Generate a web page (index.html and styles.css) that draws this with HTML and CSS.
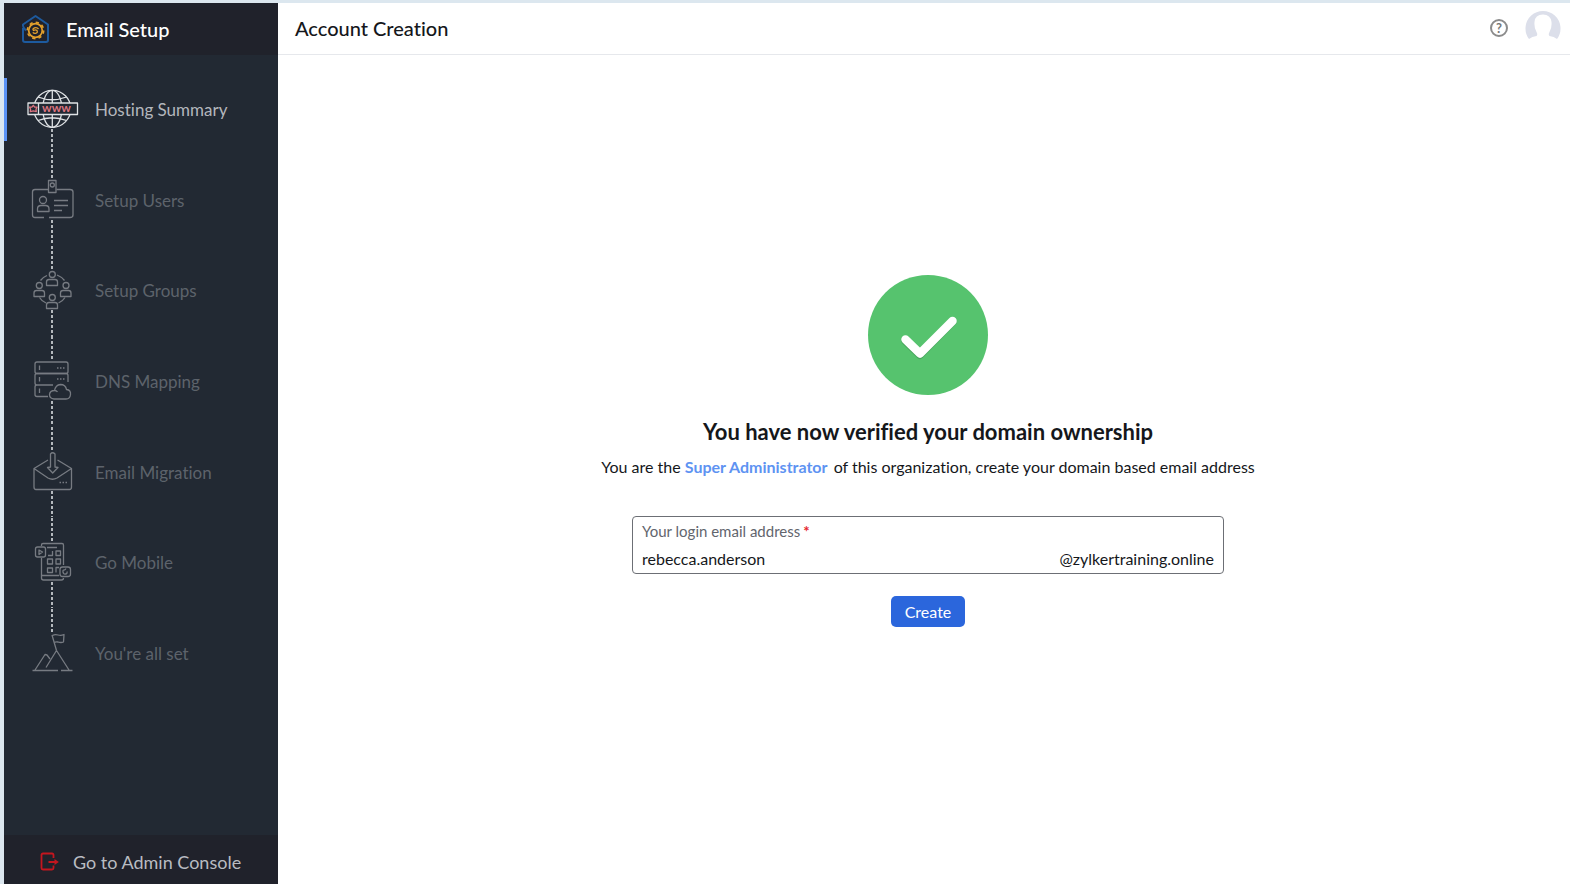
FILE: index.html
```html
<!DOCTYPE html>
<html lang="en">
<head>
    <meta charset="UTF-8">
    <meta name="viewport" content="width=device-width, initial-scale=1.0">
    <title>Email Setup</title>
    <link rel="stylesheet" href="styles.css">
</head>
<body>
    <div class="page">
        <aside class="sidebar">
            <div class="brand">
                <svg class="brand-icon" width="30" height="30" viewBox="0 0 30 30" fill="none" aria-hidden="true">
                    <path d="M2 14V26Q2 28 4 28H25Q27 28 27 26V10.500L14.500 2L2 10.500Q1.500 13 5 16.500" stroke="#1d5a9e" stroke-width="2" stroke-linejoin="round"/>
                    <circle cx="14.500" cy="16.500" r="6.800" stroke="#e2a02c" stroke-width="1.800"/>
                    <circle cx="14.500" cy="16.500" r="8.200" stroke="#e2a02c" stroke-width="1.600" stroke-dasharray="3.220 3.220"/>
                    <path d="M17.500 15Q16 13 13.500 13.800Q11 15 12.500 16.500Q14.500 15.300 16 16.500Q17 18.500 15 19.200Q13 19.800 11.800 18.300" stroke="#e2a02c" stroke-width="1.300"/>
                </svg>
                <span>Email Setup</span>
            </div>
            <nav>
                <ul class="steps">
                    <li class="active">
                        <a href="#">
                            <svg viewBox="2 -16 60 90" aria-hidden="true">
                                <path class="link-line" d="M32 49V75"/>
                                <circle cx="32.300" cy="28.800" r="18.500"/>
                                <ellipse cx="32.300" cy="28.800" rx="9.500" ry="18.500"/>
                                <path d="M32.300 10.500V47.500M18 17Q32 22.500 46.500 17M18 40.500Q32 35 46.500 40.500"/>
                                <rect class="plate" x="8" y="23" width="49.500" height="11.500"/>
                                <path d="M18.500 23V34.500"/>
                                <path class="pink" d="M13.300 25.300L14.700 27.100L17 27.200L16 29.200L16.300 31.700L13.300 30.800L10.300 31.700L10.600 29.200L9.600 27.200L11.900 27.100Z"/>
                                <text class="www" x="22" y="32">www</text>
                            </svg>
                            <span>Hosting Summary</span>
                        </a>
                    </li>
                    <li>
                        <a href="#">
                            <svg viewBox="2 -15 60 90" aria-hidden="true">
                                <path class="link-line" d="M32 -15V9M32 50V75"/>
                                <path d="M28 19.500H15Q12.500 19.500 12.500 22V45Q12.500 47.500 15 47.500H24M29 47.500H50Q53 47.500 53 45V22Q53 19.500 50 19.500H36.500"/>
                                <rect x="28.500" y="10.500" width="7.500" height="12"/>
                                <circle cx="32.300" cy="15" r="2"/>
                                <circle cx="23" cy="30" r="3.500"/>
                                <path d="M17.500 41.500V39Q17.500 35.500 21 35.500H25.500Q29 35.500 29 39V41.500ZM34 30.500H48M34 35.500H48M34 40.500H42"/>
                            </svg>
                            <span>Setup Users</span>
                        </a>
                    </li>
                    <li>
                        <a href="#">
                            <svg viewBox="2 -14 60 90" aria-hidden="true">
                                <path class="link-line" d="M32 -14V10M32 50V76"/>
                                <path d="M20.500 20.500Q23 17 27 15.500M37 15Q42 17 44.500 20.500M19.500 37.500Q22 41.500 26 43M38.500 43Q43 41 45 37.500"/>
                                <circle cx="32.300" cy="14.500" r="3"/>
                                <path d="M26.500 25.500V22Q26.500 19.500 29 19.500H35Q37.500 19.500 37.500 22V25.500Z"/>
                                <circle cx="19.300" cy="25.500" r="3"/>
                                <path d="M14 36.500V33Q14 30.500 16.500 30.500H22Q24.500 30.500 24.500 33V36.500Z"/>
                                <circle cx="46" cy="25.500" r="3"/>
                                <path d="M40.500 36.500V33Q40.500 30.500 43 30.500H48.500Q51 30.500 51 33V36.500Z"/>
                                <circle cx="32.300" cy="37.500" r="3"/>
                                <path d="M26.500 48.500V45Q26.500 42.500 29 42.500H35Q37.500 42.500 37.500 45V48.500Z"/>
                            </svg>
                            <span>Setup Groups</span>
                        </a>
                    </li>
                    <li>
                        <a href="#">
                            <svg viewBox="2 -14 60 90" aria-hidden="true">
                                <path class="link-line" d="M32 -14V10M32 51V76"/>
                                <rect x="15" y="12" width="33" height="11.500" rx="2"/>
                                <path d="M48 32V25.500Q48 23.500 46 23.500H17Q15 23.500 15 25.500V33Q15 35 17 35H33M17 35Q15 35 15 37V44.500Q15 46.500 17 46.500H28M19.500 15.500V20M19.500 27V31.500M19.500 38.500V43"/>
                                <path stroke-dasharray="1.500 1.500" d="M37 18H44.500M37 29H44.500"/>
                                <path d="M34 49Q29.500 48.500 29.500 44.500Q30 40.500 34.500 40.500Q35.500 35 40.500 34.500Q45.500 34.500 46.500 39.500Q51 40 50.500 44.500Q50 49 46 49ZM34.500 40.500Q36.500 40.500 37.500 42"/>
                            </svg>
                            <span>DNS Mapping</span>
                        </a>
                    </li>
                    <li>
                        <a href="#">
                            <svg viewBox="2 -13 60 90" aria-hidden="true">
                                <path class="link-line" d="M32 -13V12M32 51V77"/>
                                <path d="M28 20L14 28.500V47Q14 49.500 16 49.500H49.500Q51.500 49.500 51.500 47V28.500L37.500 20M14 28.500L28 38Q32.500 40.500 37 38L51.500 28.500"/>
                                <path d="M30.500 27V14Q32.500 11.500 35 14V27L38 27.500L32.700 33L27.500 27.500Z"/>
                                <path stroke-dasharray="1.500 1.500" d="M39.500 42.500H47"/>
                            </svg>
                            <span>Email Migration</span>
                        </a>
                    </li>
                    <li>
                        <a href="#">
                            <svg viewBox="2 -12 60 90" aria-hidden="true">
                                <path class="link-line" d="M32 -12V12M32 52V78"/>
                                <path d="M21.500 16V15Q21.500 13.500 23 13.500H42Q43.500 13.500 43.500 15V35M21.500 28V48Q21.500 50 23.500 50H41.500Q43.500 50 43.500 48M21.500 45.500H39M27 17.500H37"/>
                                <rect x="15.500" y="17" width="10" height="10" rx="2"/>
                                <path d="M19 20V24.500L22.500 22Z"/>
                                <path d="M28 25.500H32.500V21M27.500 38H32.500V42.500H27.500ZM36 42.500V37.500H39"/>
                                <rect x="36" y="21" width="4.500" height="4.500"/>
                                <rect x="27.500" y="29" width="5" height="5"/>
                                <rect x="36" y="29" width="4.500" height="5"/>
                                <rect x="40" y="37" width="10.500" height="9.500" rx="2.500"/>
                                <path d="M45 40Q42.500 39.500 43 42Q43.500 44.500 45.500 44Q47.500 44 47 41.500M45 40L46 38.500"/>
                            </svg>
                            <span>Go Mobile</span>
                        </a>
                    </li>
                    <li>
                        <a href="#">
                            <svg viewBox="2 -11 60 90" aria-hidden="true">
                                <path class="link-line" d="M32 -11V12"/>
                                <path d="M12.500 50.500H38M41 50.500H52.500M15 50L25 34.500L27 35L30 39M26 47.500L36.500 30.500L49 50M36.500 30.500L32 15M32.500 15.500Q35 14 38 15Q41 16 44 14.500L43.500 22Q41 23 38 22Q36 21.500 34 22.500"/>
                            </svg>
                            <span>You're all set</span>
                        </a>
                    </li>
                </ul>
            </nav>
            <a class="console-link" href="#">
                <svg width="20" height="20" viewBox="0 0 20 20" fill="none" stroke="#c4161f" stroke-width="1.800" aria-hidden="true">
                    <path d="M13.500 6V3Q13.500 1.500 12 1.500H3Q1.500 1.500 1.500 3V16Q1.500 17.500 3 17.500H12Q13.500 17.500 13.500 16V13.500M8.500 10H17"/>
                    <path d="M14.500 7L18.800 10L14.500 13Z" fill="#c4161f" stroke="none"/>
                </svg>
                <span>Go to Admin Console</span>
            </a>
        </aside>
        <div class="content">
            <header class="topbar">
                <h1>Account Creation</h1>
                <button class="icon-btn" type="button" aria-label="Help">
                    <span class="help">?</span>
                </button>
                <button class="icon-btn" type="button" aria-label="Profile">
                    <svg width="36" height="36" viewBox="0 0 36 36" aria-hidden="true">
                        <path fill="#dcdfea" d="M4 29A17.500 17.500 0 1 1 32 29Q29 26.500 24.500 26Q23 24.500 24.500 22Q27 18 26.500 12Q25.500 4.500 18 4.500Q10 4.500 9.500 12Q9 18 11.500 22Q13 24.500 11.500 26Q7 26.500 4 29Z"/>
                    </svg>
                </button>
            </header>
            <main class="verified">
                <svg class="tick" width="120" height="120" viewBox="0 0 120 120" fill="none" aria-hidden="true">
                    <circle cx="60" cy="60" r="60" fill="#56c36e"/>
                    <path d="M37.500 66L52 80L84.500 47" stroke="#48a65d" stroke-width="8" stroke-linecap="round" stroke-linejoin="round"/>
                    <path d="M37.500 64.500L52 78.500L84.500 46" stroke="#fff" stroke-width="8.500" stroke-linecap="round" stroke-linejoin="round"/>
                </svg>
                <h2>You have now verified your domain ownership</h2>
                <p>You are the <a href="#">Super Administrator</a> of this organization, create your domain based email address</p>
                <form class="create-form">
                    <div class="field">
                        <label for="email">Your login email address<span class="required">*</span></label>
                        <div class="field-row">
                            <input type="text" id="email" value="rebecca.anderson">
                            <span>@zylkertraining.online</span>
                        </div>
                    </div>
                    <button class="create-btn" type="button">Create</button>
                </form>
            </main>
        </div>
    </div>
</body>
</html>
```
FILE: styles.css
```css
*{
    margin: 0;
    padding: 0;
    box-sizing: border-box;
}
body{
    font-family: Lato, "Liberation Sans", sans-serif;
    font-size: 16px;
    font-variant-ligatures: none;
    color: #15171b;
    background-color: #fff;
}
a{
    text-decoration: none;
}
button{
    border: none;
    font-family: inherit;
    cursor: pointer;
}
.page{
    display: flex;
    min-height: 100vh;
    border-top: 3px solid #dce7ef;
    border-left: 4px solid #dce7ef;
}
/* 左侧导航 */
.sidebar{
    display: flex;
    flex-direction: column;
    width: 274px;
    flex-shrink: 0;
    background-color: #222933;
}
.brand{
    display: flex;
    align-items: center;
    gap: 15px;
    height: 52px;
    padding: 0 0 1px 17px;
    font-size: 20px;
    font-weight: 500;
    color: #fff;
    background-color: #20222b;
}
.steps{
    display: grid;
    grid-template-rows: repeat(7, 1fr);
    height: 635px;
    margin-top: 9px;
    list-style: none;
}
.steps li{
    display: flex;
    align-items: center;
}
.steps a{
    display: flex;
    align-items: center;
    gap: 13px;
    width: 100%;
    height: 63px;
    padding-left: 15px;
    border-left: 3px solid transparent;
    font-size: 17px;
    color: #5d636b;
}
.steps svg{
    width: 60px;
    height: 90px;
    flex-shrink: 0;
    fill: none;
    stroke: #777b82;
    stroke-width: 1.3;
    stroke-linejoin: round;
}
.steps .link-line{
    stroke: #b4b8bd;
    stroke-width: 2;
    stroke-dasharray: 3 2;
}
.steps .active a{
    border-left-color: #5b93f5;
    color: #b4b7bd;
}
.steps .active svg{
    stroke: #dfe2e5;
}
.steps .plate{
    fill: #222933;
}
.steps .pink{
    stroke: #dd7480;
}
.steps .www{
    fill: #dd7480;
    stroke: none;
    font-size: 12px;
    font-weight: 700;
}
.console-link{
    display: flex;
    align-items: center;
    gap: 13px;
    height: 49px;
    margin-top: auto;
    padding: 4px 0 0 36px;
    font-size: 18px;
    color: #b9bcc2;
    background-color: #20222b;
}
/* 右侧内容 */
.content{
    display: flex;
    flex-direction: column;
    flex: 1;
}
.topbar{
    display: flex;
    align-items: center;
    height: 52px;
    padding: 0 9px 1px 17px;
    border-bottom: 1px solid #e6e8ec;
}
.topbar h1{
    flex: 1;
    font-size: 20px;
    font-weight: 500;
}
.icon-btn{
    display: flex;
    margin-left: 17px;
    background: none;
}
.help{
    width: 18px;
    height: 18px;
    border: 2px solid #8c8c8c;
    border-radius: 50%;
    font-size: 13px;
    font-weight: 700;
    line-height: 14px;
    color: #777;
}
.verified{
    display: flex;
    flex-direction: column;
    align-items: center;
    justify-content: center;
    flex: 1;
    padding: 0 0 38px 8px;
}
.verified h2{
    margin-top: 22px;
    font-size: 22px;
    line-height: 30px;
}
.verified p{
    margin-top: 9px;
    font-size: 16px;
    line-height: 22px;
}
.verified p a{
    margin-right: 2px;
    font-weight: 700;
    color: #5e93f2;
}
.create-form{
    display: flex;
    flex-direction: column;
    align-items: center;
    gap: 22px;
    width: 592px;
    max-width: 100%;
    margin-top: 38px;
}
.field{
    width: 100%;
    padding: 4px 9px 3px;
    border: 1px solid #6c6f75;
    border-radius: 4px;
}
.field label{
    display: block;
    font-size: 15px;
    line-height: 20px;
    color: #62656d;
}
.required{
    margin-left: 3px;
    font-weight: 700;
    color: #e5262b;
}
.field-row{
    display: flex;
    align-items: center;
    margin-top: 7px;
    line-height: 22px;
}
.field input{
    flex: 1;
    min-width: 0;
    border: none;
    outline: none;
    font: inherit;
    font-variant-ligatures: none;
    color: inherit;
    background: none;
}
.create-btn{
    height: 31px;
    padding: 0 14px;
    border-radius: 5px;
    font-size: 16px;
    color: #fff;
    background-color: #2b66dc;
}
```
